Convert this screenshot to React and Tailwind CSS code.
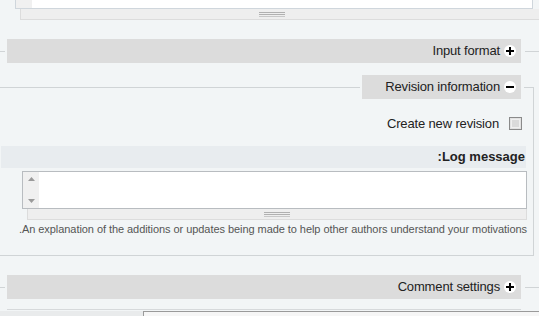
import React from "react";

function ToggleIcon({ open }) {
  return (
    <span className="w-[12px] h-[12px] rounded-full bg-white flex items-center justify-center flex-none">
      <svg width="8" height="8" viewBox="0 0 8 8">
        <rect x="0" y="3" width="8" height="2" fill="#000" />
        {!open && <rect x="3" y="0" width="2" height="8" fill="#000" />}
      </svg>
    </span>
  );
}

function Grippie({ className }) {
  return (
    <div className={"h-[11px] bg-[#eeeeee] border border-[#dcdcdc] flex items-center " + className}>
      <div className="flex flex-col gap-px w-[26px]">
        <div className="h-px bg-[#b0b0b0]" />
        <div className="h-px bg-[#b0b0b0]" />
        <div className="h-px bg-[#c8c8c8]" />
      </div>
    </div>
  );
}

function ScrollArrows() {
  return (
    <div className="w-[16px] bg-[#f0f0f0] flex flex-col justify-between items-center py-[5px]">
      <svg width="7" height="4" viewBox="0 0 7 4">
        <path d="M0 4 L3.5 0 L7 4 Z" fill="#9a9a9a" />
      </svg>
      <svg width="7" height="4" viewBox="0 0 7 4">
        <path d="M0 0 L3.5 4 L7 0 Z" fill="#9a9a9a" />
      </svg>
    </div>
  );
}

function CollapsedFieldset({ title }) {
  return (
    <div className="h-[24px] flex items-center">
      <div className="w-[5px] h-px bg-[#d0d4d6]" />
      <div className="ml-[2px] w-[514px] h-full bg-[#dcdcdc] flex items-center justify-end gap-[4px] pr-[5px] text-[13px] tracking-[-0.15px] text-[#222]">
        <span>{title}</span>
        <ToggleIcon open={false} />
      </div>
      <div className="ml-[4px] flex-1 h-px bg-[#d0d4d6]" />
    </div>
  );
}

export default function App() {
  return (
    <div className="w-[539px] h-[316px] overflow-hidden bg-[#f2f5f6] font-['Liberation_Sans',Arial,sans-serif]">
      {/* previous textarea */}
      <div className="ml-[15px] mr-[6px] h-[9px] border border-t-0 border-[#cfd6dc] bg-white flex">
        <div className="w-[16px] bg-[#f0f0f0]" />
      </div>
      <Grippie className="ml-[20px] -mr-[2px] border-t-0 pl-[238px]" />

      <div className="mt-[19px]">
        <CollapsedFieldset title="Input format" />
      </div>

      {/* revision information */}
      <div className="mt-[12px]">
        <div className="h-[24px] flex items-center">
          <div className="flex-1 h-px bg-[#d0d4d6]" />
          <div className="ml-[2px] w-[159px] h-full bg-[#dcdcdc] flex items-center justify-end gap-[4px] pr-[5px] text-[13px] tracking-[-0.15px] text-[#222]">
            <span>Revision information</span>
            <ToggleIcon open={true} />
          </div>
          <div className="ml-[3px] mr-[5px] w-[10px] h-[12px] self-end border-t border-r border-[#d0d4d6]" />
        </div>
        <div className="mr-[5px] h-[157px] border-r border-b border-[#d0d4d6] flex flex-col">
          <div className="mt-[17px] h-[15px] flex items-center justify-end gap-[10px] pr-[11px] text-[13px] tracking-[-0.15px] text-[#222]">
            <span>Create new revision</span>
            <span className="w-[13px] h-[13px] border border-[#8a8a8a] bg-[#e2e2e2] flex items-center justify-center">
              <span className="w-[9px] h-[9px] bg-[#dadada] border border-[#efefef]" />
            </span>
          </div>
          <div
            dir="rtl"
            className="mt-[15px] ml-[1px] mr-[7px] h-[22px] bg-[#e8ecef] flex items-center pr-[1px] text-[13px] font-bold text-[#222]"
          >
            Log message:
          </div>
          <div className="mt-[3px] ml-[22px] mr-[6px] h-[38px] border border-[#b8bcc0] bg-white flex">
            <ScrollArrows />
          </div>
          <Grippie className="ml-[27px] mr-[6px] border-t-0 justify-center" />
          <div dir="rtl" className="mt-[2px] pr-[6px] text-[11px] leading-[14px] tracking-[-0.06px] text-[#555]">
            An explanation of the additions or updates being made to help other authors understand your motivations.
          </div>
        </div>
      </div>

      <div className="mt-[19px]">
        <CollapsedFieldset title="Comment settings" />
      </div>

      <div className="mt-[10px] ml-[7px] w-[514px] h-px bg-[#d6d9db]" />
      <div className="mt-px h-[8px] flex">
        <div className="w-[143px] bg-[#e9ebec]" />
        <div className="flex-1 bg-[#f6f6f6] border-t border-l border-[#9a9a9a]" />
      </div>
    </div>
  );
}
